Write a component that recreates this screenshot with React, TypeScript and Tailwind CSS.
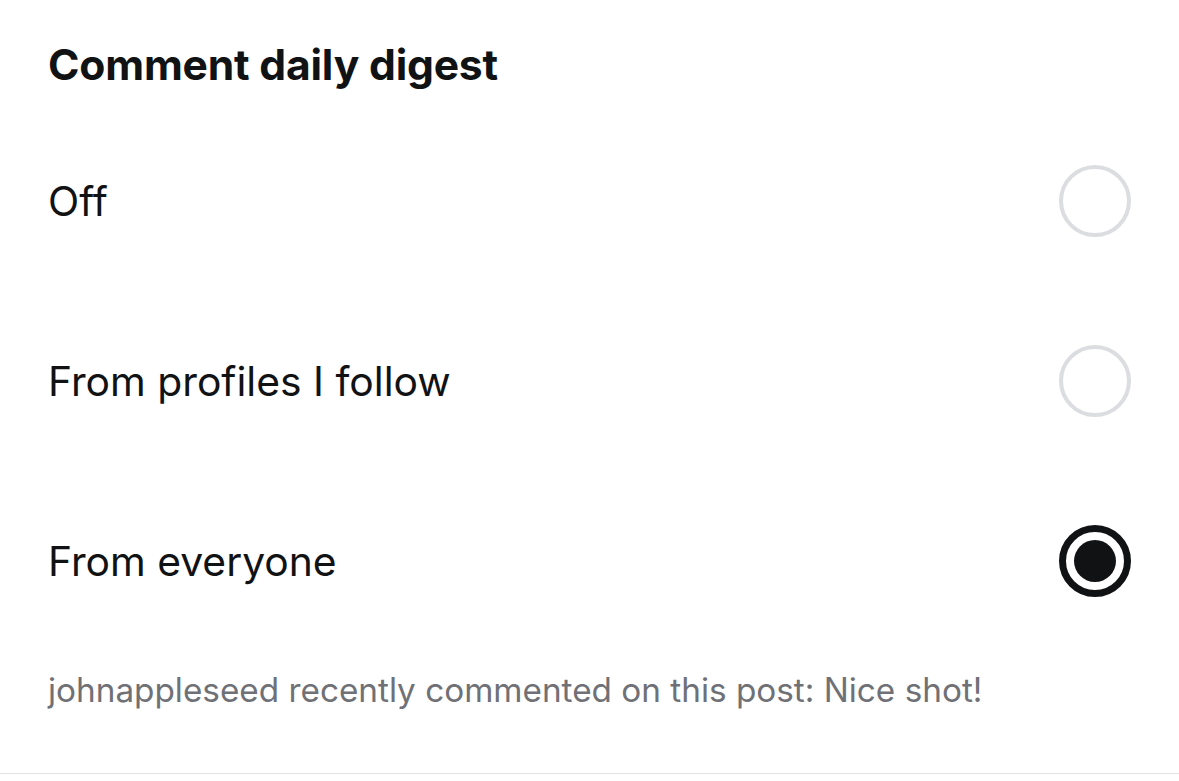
import React, { useState } from 'react';

const options = ['Off', 'From profiles I follow', 'From everyone'];

const Radio: React.FC<{ checked: boolean }> = ({ checked }) =>
  checked ? (
    <span className="w-[72px] h-[72px] rounded-full border-[7px] border-[#111214] flex items-center justify-center">
      <span className="w-[42px] h-[42px] rounded-full bg-[#111214]" />
    </span>
  ) : (
    <span className="w-[72px] h-[72px] rounded-full border-[4px] border-[#dcdde0]" />
  );

const App: React.FC = () => {
  const [selected, setSelected] = useState(2);

  return (
    <div className="w-full h-[781px] bg-white font-['Inter',sans-serif] text-[#111214] flex flex-col">
      <div className="px-[48px] flex-1 flex flex-col">
        <h2 className="mt-[40px] h-[71px] text-[42.6px] leading-[50px] font-bold tracking-[-0.2px]">
          Comment daily digest
        </h2>
        {options.map((label, i) => (
          <button
            key={label}
            onClick={() => setSelected(i)}
            className="h-[180px] flex items-center justify-between text-left"
          >
            <span className="text-[40.8px] leading-[48px]">{label}</span>
            <Radio checked={selected === i} />
          </button>
        ))}
        <p className="mt-[19px] text-[33.3px] leading-[40px] text-[#6f7177]">
          johnappleseed recently commented on this post: Nice shot!
        </p>
      </div>
      <div className="h-px bg-[#e3e3e6] mb-[7px]" />
    </div>
  );
};

export default App;
